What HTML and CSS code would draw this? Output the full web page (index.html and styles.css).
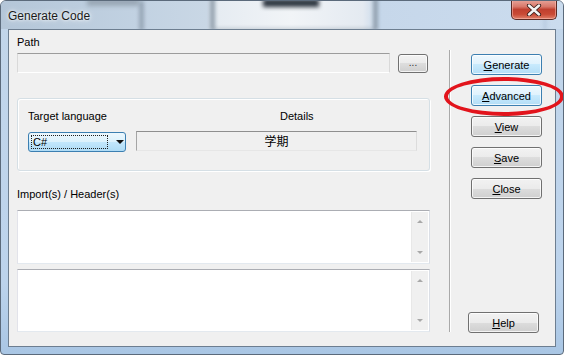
FILE: index.html
```html
<!DOCTYPE html>
<html lang="en">
<head>
    <meta charset="UTF-8">
    <title>Generate Code</title>
    <link rel="stylesheet" href="styles.css">
</head>
<body>
    <div class="window">
        <div class="titlebar">
            <div class="backdrop">
                <div class="blur blur-text-left"></div>
                <div class="blur blur-bar"></div>
                <div class="blur blur-panel"></div>
                <div class="blur blur-text-mid"></div>
                <div class="blur blur-line-right"></div>
            </div>
            <span class="title">Generate Code</span>
            <div class="close-btn">
                <svg width="16" height="12" viewBox="0 0 16 12">
                    <path d="M3 1.5 L13 10.5 M13 1.5 L3 10.5" stroke="#3a1e1a" stroke-width="4.2" stroke-linecap="round"/>
                    <path d="M3 1.5 L13 10.5 M13 1.5 L3 10.5" stroke="#f4f4f4" stroke-width="2.4" stroke-linecap="round"/>
                </svg>
            </div>
        </div>

        <div class="client">
            <div class="main">
                <div class="lbl path-lbl">Path</div>
                <div class="path-row">
                    <div class="path-input"></div>
                    <button class="btn btn-dots">...</button>
                </div>

                <div class="group">
                    <div class="group-head">
                        <span class="lbl target-lbl">Target language</span>
                        <span class="lbl details-lbl">Details</span>
                    </div>
                    <div class="group-row">
                        <div class="combo">
                            <span class="combo-text">C#</span>
                            <span class="combo-arrow"></span>
                        </div>
                        <div class="details">学期</div>
                    </div>
                </div>

                <div class="lbl import-lbl">Import(s) / Header(s)</div>
                <div class="textbox tb-imports">
                    <div class="scrollbar"><span class="arr up"></span><span class="arr down"></span></div>
                </div>
                <div class="textbox tb-code">
                    <div class="scrollbar"><span class="arr up"></span><span class="arr down"></span></div>
                </div>
            </div>

            <div class="separator"></div>

            <div class="buttons">
                <button class="btn btn-blue"><u>G</u>enerate</button>
                <button class="btn btn-blue"><u>A</u>dvanced</button>
                <button class="btn"><u>V</u>iew</button>
                <button class="btn"><u>S</u>ave</button>
                <button class="btn"><u>C</u>lose</button>
                <button class="btn btn-help"><u>H</u>elp</button>
            </div>
        </div>

        <div class="highlight"></div>
    </div>
</body>
</html>
```

FILE: styles.css
```css
body {
    margin: 0;
    background: #ffffff;
    font-family: 'Liberation Sans', Arial, sans-serif;
    font-size: 11px;
    color: #000;
}
.window {
    position: relative;
    width: 564px;
    height: 355px;
    box-sizing: border-box;
    border: 1px solid #5b6a7b;
    border-radius: 6px 6px 4px 4px;
    background: linear-gradient(#c3d6ea, #bcd3ec 80%, #a9c6e4);
    overflow: hidden;
    display: flex;
    flex-direction: column;
}

/* title bar */
.titlebar {
    position: relative;
    height: 28px;
    flex: none;
}
.backdrop {
    position: absolute;
    inset: 0;
    overflow: hidden;
    background: linear-gradient(to right, #b4c6d8 0, #c2d2e2 140px, #c9d7e5 205px, #e6ecf2 218px, #f1f4f7 290px, #e4eaf1 362px, #c6d7ea 378px, #cbdcee 100%);
}
.blur {
    position: absolute;
    filter: blur(2px);
}
.blur-text-left {
    left: 86px;
    top: -3px;
    width: 52px;
    height: 8px;
    background: #9aa8b6;
}
.blur-bar {
    left: 139px;
    top: 0;
    width: 3px;
    height: 30px;
    background: #7d8c9c;
}
.blur-panel {
    left: 210px;
    top: -4px;
    width: 160px;
    height: 32px;
    border-left: 3px solid #6f7d8b;
    border-right: 3px solid #6f7d8b;
    border-bottom: 2px solid #9aa6b2;
}
.blur-text-mid {
    left: 262px;
    top: -2px;
    width: 56px;
    height: 8px;
    background: #2e3640;
}
.blur-line-right {
    left: 543px;
    top: 0;
    width: 2px;
    height: 30px;
    background: #a8bcd2;
}
.title {
    position: relative;
    display: block;
    padding: 9px 0 0 7px;
    font-size: 12px;
    line-height: 13px;
    color: #1b1b1b;
    text-shadow: 0 0 6px #ffffff, 0 0 3px #ffffff;
}
.close-btn {
    position: absolute;
    left: 510px;
    top: -1px;
    width: 46px;
    height: 20px;
    box-sizing: border-box;
    border: 1px solid #5a2a24;
    border-top: none;
    border-radius: 0 0 5px 5px;
    background: linear-gradient(#e8a59a 0%, #d8786a 35%, #c0402f 50%, #c94a35 75%, #e0806a 100%);
    box-shadow: inset 0 0 0 1px rgba(255, 200, 190, 0.5);
    display: flex;
    align-items: center;
    justify-content: center;
}

/* client area */
.client {
    flex: 1;
    margin: 0 7px 7px;
    border: 1px solid #6d7e90;
    background: #f0f0f0;
    display: flex;
}
.main {
    width: 413px;
    margin-left: 8px;
    padding-top: 6px;
}
.lbl {
    line-height: 13px;
    white-space: nowrap;
}
.path-row {
    display: flex;
    align-items: center;
    gap: 8px;
    margin-top: 4px;
    height: 20px;
}
.path-input {
    width: 373px;
    height: 20px;
    box-sizing: border-box;
    border: 1px solid;
    border-color: #9c9c9c #d9d9d9 #ffffff #d9d9d9;
    background: #f0f0f0;
}

/* buttons */
.btn {
    display: block;
    width: 71px;
    height: 21px;
    padding: 0;
    box-sizing: border-box;
    border: 1px solid #707070;
    border-radius: 3px;
    background: linear-gradient(#f2f2f2 0%, #ebebeb 50%, #dddddd 50%, #cfcfcf 100%);
    box-shadow: inset 0 0 0 1px rgba(255, 255, 255, 0.75);
    font-family: 'Liberation Sans', Arial, sans-serif;
    font-size: 11px;
    color: #000;
}
.btn u {
    text-underline-offset: 1px;
}
.btn-dots {
    width: 30px;
    height: 19px;
    font-size: 10px;
    color: #333;
    line-height: 10px;
}
.btn-blue {
    border-color: #3c7fb1;
    background: linear-gradient(#eef8fe 0%, #dff2fd 50%, #c8eafd 50%, #b3ddf6 100%);
}

/* group box */
.group {
    margin-top: 25px;
    height: 73px;
    box-sizing: border-box;
    border: 1px solid #d5dfe5;
    border-radius: 3px;
    box-shadow: inset 1px 1px 0 #ffffff, 1px 1px 0 #ffffff;
    padding: 11px 12px 0 10px;
}
.group-head {
    display: flex;
}
.target-lbl {
    width: 108px;
}
.details-lbl {
    padding-left: 144px;
}
.group-row {
    display: flex;
    align-items: flex-start;
    gap: 10px;
    margin-top: 8px;
}
.combo {
    position: relative;
    width: 98px;
    height: 20px;
    box-sizing: border-box;
    margin-top: 1px;
    border: 1px solid #3c7fb1;
    border-radius: 3px;
    background: linear-gradient(#ecf7fd 0%, #dbf1fc 50%, #c3e7fc 50%, #aedbf5 100%);
    padding: 2px;
}
.combo-text {
    display: block;
    width: 77px;
    height: 14px;
    box-sizing: border-box;
    border: 1px dotted #202020;
    line-height: 12px;
    padding-left: 1px;
}
.combo-arrow {
    position: absolute;
    left: 87px;
    top: 7px;
    border-left: 4px solid transparent;
    border-right: 4px solid transparent;
    border-top: 4px solid #111;
}
.details {
    width: 281px;
    height: 20px;
    box-sizing: border-box;
    border: 1px solid;
    border-color: #8f8f8f #dcdcdc #e6e6e6 #a5a5a5;
    text-align: center;
    font-family: 'Noto Sans CJK SC', sans-serif;
    font-size: 12px;
    line-height: 17px;
}

/* text boxes */
.import-lbl {
    margin-top: 17px;
}
.textbox {
    position: relative;
    width: 413px;
    box-sizing: border-box;
    border: 1px solid;
    border-color: #abadb3 #dbdfe6 #e3e9ef #e2e3ea;
    background: #ffffff;
}
.tb-imports {
    margin-top: 9px;
    height: 54px;
}
.tb-code {
    margin-top: 5px;
    height: 63px;
}
.scrollbar {
    position: absolute;
    right: 1px;
    top: 1px;
    bottom: 1px;
    width: 16px;
    background: #f0f0f0;
    border-left: 1px solid #e8e8e8;
}
.arr {
    position: absolute;
    left: 5px;
    border-left: 3px solid transparent;
    border-right: 3px solid transparent;
}
.arr.up {
    top: 8px;
    border-bottom: 3px solid #a8a8a8;
}
.arr.down {
    bottom: 8px;
    border-top: 3px solid #a8a8a8;
}

/* right column */
.separator {
    width: 1px;
    margin: 20px 0 14px 19px;
    border-left: 1px solid #a9a9a9;
    border-right: 1px solid #ffffff;
    width: 0;
}
.buttons {
    display: flex;
    flex-direction: column;
    gap: 10px;
    margin-left: 20px;
    padding: 24px 0 13px;
}
.btn-help {
    margin-top: auto;
    margin-left: -3px;
}

/* red annotation ellipse */
.highlight {
    position: absolute;
    left: 443px;
    top: 76px;
    width: 120px;
    height: 39px;
    box-sizing: border-box;
    border: 4px solid #e2141c;
    border-radius: 50%;
}
```
